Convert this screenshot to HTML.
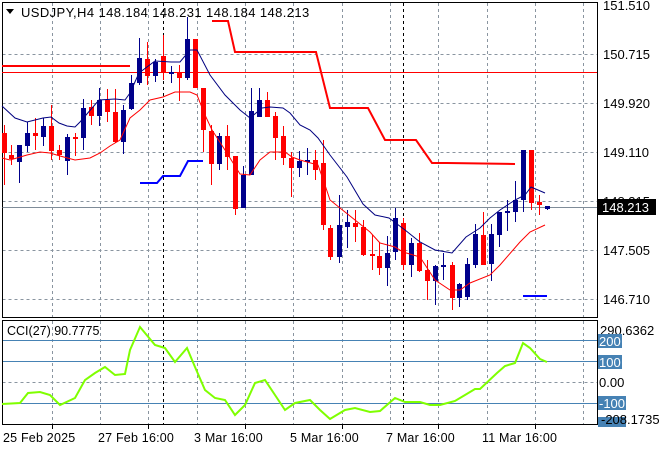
<!DOCTYPE html>
<html><head><meta charset="utf-8"><style>
html,body{margin:0;padding:0;background:#fff;width:660px;height:450px;overflow:hidden}
svg{display:block;font-family:"Liberation Sans",sans-serif}
</style></head><body>
<svg width="660" height="450" viewBox="0 0 660 450" xmlns="http://www.w3.org/2000/svg">
<rect width="660" height="450" fill="#fff"/>
<g stroke="#8a95a0" stroke-width="1" stroke-dasharray="3,3" fill="none">
<path d="M2.5 54.5H597M2.5 103.5H597M2.5 152.5H597M2.5 201.5H597M2.5 250.5H597M2.5 299.5H597"/>
<path d="M52.5 3V317M100.5 3V317M148.5 3V317M197.5 3V317M245.5 3V317M293.5 3V317M342.5 3V317M390.5 3V317M438.5 3V317M487.5 3V317M535.5 3V317M583.5 3V317"/>
<path d="M52.5 321V425M100.5 321V425M148.5 321V425M197.5 321V425M245.5 321V425M293.5 321V425M342.5 321V425M390.5 321V425M438.5 321V425M487.5 321V425M535.5 321V425M583.5 321V425"/>
<path d="M2.5 382.5H597"/>
</g>
<g stroke="#000" stroke-dasharray="3,3"><path d="M163.5 3V425M403.5 3V425"/></g>
<g stroke="#4682b4"><path d="M2.5 340.5H597M2.5 361.5H597M2.5 403.5H597"/></g>
<g fill="none" stroke="#000"><rect x="2.5" y="2.5" width="595" height="315"/><rect x="2.5" y="320.5" width="595" height="104"/></g>
<path d="M2.5 207.5H597" stroke="#7f8c99"/>
<path d="M2 72.5H597" stroke="#f00"/>
<path stroke="#f00" fill="none" d="M4.5 125V185M11.5 145V165M35.5 118V150M51.5 105V160M59.5 145V160M75.5 133V156M91.5 100V125M107.5 89V122M115.5 89V143M147.5 42V85M163.5 35V80M179.5 65V101M195.5 39V88M203.5 88V152M211.5 125V185M227.5 125V170M235.5 156V215M267.5 92V117M275.5 112V160M283.5 126V165M291.5 152V197M315.5 150V180M323.5 140V230M330.5 225V260M355.5 210V242M363.5 220V256M372.5 235V270M379.5 242V275M403.5 218V270M419.5 233V272M427.5 260V300M452.5 262V310M483.5 212V265M531.5 150V210M539.5 195V215"/>
<path fill="#f00" d="M2 133h5v20h-5zM9 155h5v4h-5zM33 133h5v3h-5zM49 126h5v25h-5zM57 150h5v5h-5zM73 137h5v2h-5zM89 107h5v9h-5zM105 100h5v12h-5zM113 112h5v30h-5zM145 59h5v17h-5zM161 56h5v17h-5zM177 73h5v5h-5zM193 39h5v49h-5zM201 88h5v42h-5zM209 131h5v33h-5zM225 136h5v21h-5zM233 156h5v53h-5zM265 100h5v17h-5zM273 116h5v22h-5zM281 136h5v22h-5zM289 158h5v10h-5zM313 160h5v10h-5zM321 163h5v62h-5zM328 228h5v29h-5zM353 223h5v4h-5zM361 227h5v28h-5zM370 254h5v2h-5zM377 256h5v12h-5zM401 223h5v42h-5zM417 243h5v28h-5zM425 270h5v11h-5zM450 265h5v33h-5zM481 235h5v30h-5zM529 150h5v53h-5zM537 202h5v3h-5z"/>
<path stroke="#00008b" fill="none" d="M19.5 145V183M27.5 122V152M43.5 118V146M67.5 134V175M83.5 99V150M99.5 88V126M123.5 105V154M131.5 75V110M139.5 38V85M155.5 59V82M171.5 66V83M187.5 17V80M219.5 133V170M243.5 166V208M251.5 88V175M259.5 88V117M299.5 151V177M307.5 148V175M339.5 195V263M347.5 210V248M387.5 236V286M395.5 208V260M411.5 238V277M435.5 265V305M443.5 253V280M459.5 283V307M467.5 258V300M475.5 224V268M491.5 224V281M499.5 212V247M507.5 200V231M515.5 181V222M523.5 150V212M547.5 206V210"/>
<path fill="#00008b" d="M17 145h5v17h-5zM25 133h5v13h-5zM41 126h5v11h-5zM65 137h5v24h-5zM81 108h5v30h-5zM97 100h5v16h-5zM121 110h5v32h-5zM129 83h5v26h-5zM137 58h5v25h-5zM153 62h5v14h-5zM169 72h5v2h-5zM185 39h5v39h-5zM217 136h5v28h-5zM241 175h5v33h-5zM249 111h5v64h-5zM257 100h5v17h-5zM297 161h5v7h-5zM305 160h5v2h-5zM337 225h5v32h-5zM345 222h5v5h-5zM385 253h5v15h-5zM393 218h5v34h-5zM409 243h5v22h-5zM433 266h5v15h-5zM441 265h5v2h-5zM457 284h5v14h-5zM465 264h5v33h-5zM473 234h5v31h-5zM489 234h5v30h-5zM497 212h5v23h-5zM505 211h5v2h-5zM513 200h5v12h-5zM521 150h5v50h-5zM545 206h5v3h-5z"/>
<polyline fill="none" stroke="#000080" points="2,106 15,118 27,122 43,118 51,117 59,123 67,126 75,127 80,122 99,100 115,99 125,100 130,93 139,73 155,61 171,62 180,62 190,50 197,50 210,75 225,95 240,110 250,118 262,108 270,107 283,108 290,113 300,125 310,130 318,138 323,145 330,155 347,177 363,204 375,215 389,218 405,230 420,242 435,250 452,253 466,237 480,228 490,218 500,210 515,200 525,195 531,187 538,190 545,193"/>
<polyline fill="none" stroke="#f00" points="2,158 10,160 27,155 40,152 50,153 60,156 75,160 90,158 100,153 110,146 120,140 130,118 140,110 150,100 163,97 175,92 190,92 197,95 205,115 212,130 225,150 240,174 250,175 260,160 270,152 285,152 292,157 300,160 318,165 325,185 330,200 345,212 370,232 380,243 395,247 403,252 420,257 435,280 450,290 460,290 470,283 490,275 500,265 520,242 530,232 545,225"/>
<g fill="none" stroke-width="2">
<path d="M2 66H130" stroke="#f00"/>
<path d="M212 21H228L235 52H316L330 108H368L385 140H416L432 163H447L515 164" stroke="#f00"/>
<path d="M140 183H157L163 176H180L188 161H203" stroke="#00f"/>
<path d="M523 296H547" stroke="#00f"/>
</g>
<polyline fill="none" stroke="#7fff00" stroke-width="2" points="2,404 20,403 28,393 40,392 50,395 60,405 75,398 85,380 95,373 105,367 115,375 125,374 130,350 140,327 155,345 165,348 175,362 187,348 195,367 205,390 215,398 225,400 235,415 245,405 255,383 265,380 275,395 285,410 295,403 310,400 320,410 330,419 345,410 355,408 370,412 380,411 395,398 405,402 420,402 430,405 440,405 455,401 465,395 475,389 480,389 497,373 505,366 515,363 523,343 530,348 540,359 547,362"/>
<path d="M6 9H14L10 14Z" fill="#000"/>
<text x="21" y="17" font-size="13" letter-spacing="0.4" fill="#000">USDJPY,H4  148.184 148.231 148.184 148.213</text>
<text x="7" y="335" font-size="12.5" fill="#000">CCI(27) 90.7775</text>
<g font-size="13" fill="#000">
<text x="603" y="10">151.510</text>
<text x="603" y="59">150.715</text>
<text x="603" y="108">149.920</text>
<text x="603" y="157">149.110</text>
<text x="603" y="206">148.315</text>
<text x="603" y="255">147.505</text>
<text x="603" y="304">146.710</text>
<text x="600" y="335">290.6362</text>
<text x="599" y="387">0.00</text>
</g>
<rect x="598" y="199" width="58" height="16" fill="#000"/>
<text x="602" y="212" font-size="13" fill="#fff">148.213</text>
<g fill="#4682b4"><rect x="598" y="334" width="24" height="14"/><rect x="598" y="355" width="24" height="14"/><rect x="598" y="396" width="28" height="14"/><rect x="598" y="417" width="28" height="10"/></g>
<g font-size="13" fill="#fff"><text x="599" y="346">200</text><text x="599" y="367">100</text><text x="599" y="408">-100</text></g>
<text x="601" y="424" font-size="13" fill="#000">-208.1735</text>
<g stroke="#000"><path d="M52.5 425V429M148.5 425V429M245.5 425V429M342.5 425V429M438.5 425V429M535.5 425V429"/></g>
<g font-size="12.5" letter-spacing="0.2" fill="#000">
<text x="3" y="442">25 Feb 2025</text>
<text x="98" y="442">27 Feb 16:00</text>
<text x="194" y="442">3 Mar 16:00</text>
<text x="290" y="442">5 Mar 16:00</text>
<text x="386" y="442">7 Mar 16:00</text>
<text x="482" y="442">11 Mar 16:00</text>
</g>
</svg>
</body></html>
